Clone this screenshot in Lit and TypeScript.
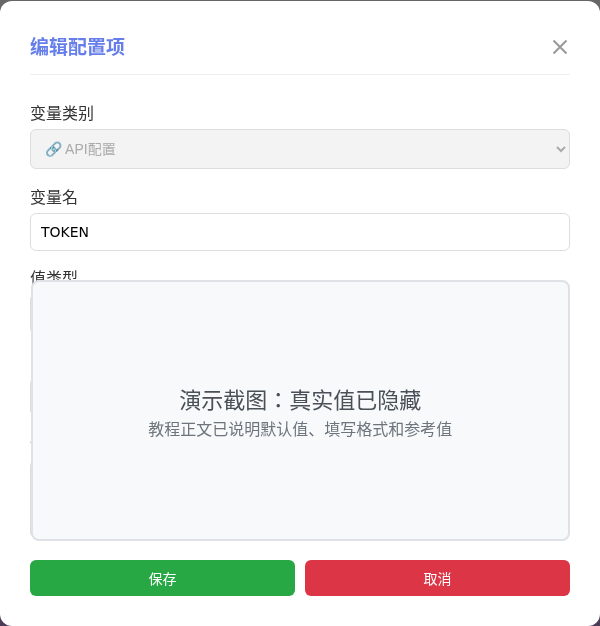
import { LitElement, html, css } from "lit";
import { customElement } from "lit/decorators.js";

@customElement("app-root")
export class AppRoot extends LitElement {
  static styles = css`
    :host {
      display: block;
      width: 600px;
      height: 626px;
      overflow: hidden;
      background: linear-gradient(180deg, #666 0%, #666 20%, #4a3b57 100%);
      font-family: "Liberation Sans", "Noto Sans CJK JP", sans-serif;
    }
    .modal {
      position: relative;
      box-sizing: border-box;
      height: 625px;
      margin-top: 1px;
      padding: 29px 30px 30px;
      background: #fff;
      border-radius: 12px;
      display: flex;
      flex-direction: column;
      will-change: transform;
    }
    .header {
      display: flex;
      justify-content: space-between;
      align-items: center;
      height: 34px;
      padding-bottom: 10px;
      border-bottom: 1px solid #eee;
      margin-bottom: 27px;
    }
    h3 {
      margin: 0;
      padding-top: 2px;
      font-size: 19px;
      font-weight: 700;
      color: #667eea;
      line-height: 34px;
    }
    .close {
      display: block;
      width: 20px;
      height: 20px;
      margin-top: -1px;
    }
    .form {
      flex: 1;
      min-height: 0;
      display: flex;
      flex-direction: column;
    }
    .group {
      margin-bottom: 17px;
    }
    .group.short {
      margin-bottom: 16px;
    }
    label {
      display: block;
      font-size: 16px;
      line-height: 24px;
      margin: 0 0 3px;
      color: #333;
    }
    select,
    input,
    textarea {
      display: block;
      box-sizing: border-box;
      width: 100%;
      margin: 0;
      padding: 10px;
      border: 1px solid #ddd;
      border-radius: 6px;
      background: #fff;
      color: #000;
      font-family: "Liberation Sans", "Noto Sans CJK JP", sans-serif;
      font-size: 14px;
    }
    input {
      font-family: "DejaVu Sans", "Noto Sans CJK JP", sans-serif;
    }
    select {
      height: 40px;
    }
    input {
      height: 38px;
    }
    textarea {
      height: 78px;
      resize: none;
    }
    select:disabled {
      background: #f3f3f3;
      color: #aaa;
      opacity: 1;
    }
    .actions {
      display: flex;
      gap: 10px;
    }
    button {
      flex: 1;
      height: 36px;
      border: 0;
      border-radius: 6px;
      color: #fff;
      font-family: "Liberation Sans", "Noto Sans CJK JP", sans-serif;
      font-size: 14px;
    }
    .save {
      background: #28a745;
    }
    .cancel {
      background: #dc3545;
    }
    .mask {
      position: absolute;
      left: 30.5px;
      top: 279px;
      width: 539.5px;
      height: 261px;
      box-sizing: border-box;
      padding-top: 7px;
      border: 2px solid #dee2e6;
      border-radius: 8px;
      background: #f8f9fa;
      display: flex;
      flex-direction: column;
      align-items: center;
      justify-content: center;
      gap: 3px;
    }
    .mask-title {
      font-size: 22px;
      line-height: 28px;
      color: #495057;
    }
    .mask-sub {
      font-size: 16px;
      line-height: 24px;
      color: #6c757d;
    }
  `;

  render() {
    return html`
      <div class="modal">
        <div class="header">
          <h3>编辑配置项</h3>
          <svg class="close" viewBox="0 0 20 20" fill="none" stroke="#999" stroke-width="2">
            <path d="M3.5 3.5 L16.5 16.5 M16.5 3.5 L3.5 16.5" />
          </svg>
        </div>
        <div class="form">
          <div class="group">
            <label>变量类别</label>
            <select disabled><option>🔗 API配置</option></select>
          </div>
          <div class="group short">
            <label>变量名</label>
            <input value="TOKEN" />
          </div>
          <div class="group">
            <label>值类型</label>
            <select disabled><option></option></select>
          </div>
          <div class="group">
            <label>当前值</label>
            <input />
          </div>
          <div class="group">
            <label>说明</label>
            <textarea></textarea>
          </div>
        </div>
        <div class="actions">
          <button class="save">保存</button>
          <button class="cancel">取消</button>
        </div>
        <div class="mask">
          <div class="mask-title">演示截图：真实值已隐藏</div>
          <div class="mask-sub">教程正文已说明默认值、填写格式和参考值</div>
        </div>
      </div>
    `;
  }
}
